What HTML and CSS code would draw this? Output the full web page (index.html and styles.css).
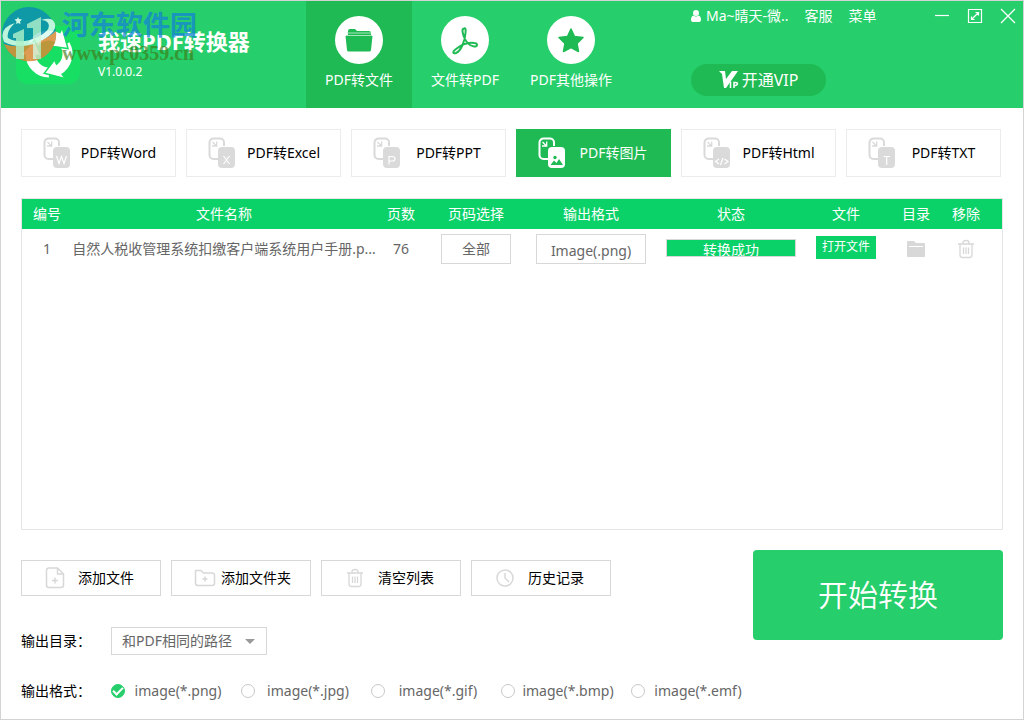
FILE: index.html
```html
<!DOCTYPE html>
<html lang="zh-CN">
<head>
<meta charset="utf-8">
<title>我速PDF转换器</title>
<link rel="stylesheet" href="styles.css">
</head>
<body>
<svg class="defs" aria-hidden="true">
  <symbol id="pages" viewBox="0 0 28 32">
    <path d="M10 22H5.5A4 4 0 0 1 1.500 18V5.500A4 4 0 0 1 5.500 1.500H12A4 4 0 0 1 16 5.500V9" fill="none" stroke="currentColor" stroke-width="2"/>
    <path d="M4.500 5L8 8.500M8.700 4.500V9H4" fill="none" stroke="currentColor" stroke-width="1.300"/>
    <rect x="10" y="10" width="17" height="21" rx="4" fill="currentColor"/>
  </symbol>
  <symbol id="trash" viewBox="0 0 18 20">
    <path d="M1 5H17M3 5V16Q3 18.500 5.500 18.500H12.500Q15 18.500 15 16V5M6 5V3.500Q6 1.500 9 1.500T12 3.500V5M6.500 8.500V15M9 8.500V15M11.500 8.500V15" fill="none" stroke="currentColor" stroke-width="1.300"/>
  </symbol>
</svg>
<div class="window">
  <header class="header">
    <div class="brand">
      <svg class="logo" viewBox="0 0 64 58" aria-hidden="true">
        <rect width="64" height="58" rx="12" fill="#17df63"/>
        <g fill="none" stroke="#fff" stroke-width="10">
          <path id="arc" d="M17 18.700A18.500 18.500 0 0 1 42.200 12"/>
          <use href="#arc" transform="rotate(120 33 28)"/>
          <use href="#arc" transform="rotate(240 33 28)"/>
        </g>
        <g fill="#fff">
          <path id="head" d="M40 15L36.500 20L51.500 22L46.500 3L43 10Z"/>
          <path id="gap" d="M36.500 20.500L52 22.500L46.500 3" fill="none" stroke="#17df63" stroke-width="1.500"/>
          <use href="#head" transform="rotate(120 33 28)"/>
          <use href="#gap" transform="rotate(120 33 28)"/>
          <use href="#head" transform="rotate(240 33 28)"/>
          <use href="#gap" transform="rotate(240 33 28)"/>
        </g>
      </svg>
      <div class="names">
        <h1 class="title">我速PDF转换器</h1>
        <span class="version">V1.0.0.2</span>
      </div>
      <div class="watermark" aria-hidden="true">
        <svg class="emblem" viewBox="0 0 56 58">
          <circle cx="28" cy="28" r="27" fill="#0b8fb0"/>
          <path d="M3 38Q17 43 33 37T55 25A27 27 0 0 1 3 38Z" fill="#d98a35"/>
          <path d="M3 36Q-3 22 14 17Q5 25 7 32Q19 39 37 31Q51 24 47 17Q45 14 40 14Q52 10 54 18Q56 27 38 36Q19 44 3 36Z" fill="#d9fbf0"/>
          <path d="M12 28L23 23V53H15V32H12ZM26 18L40 11V53H32V22H26Z" fill="#c9f5dc" opacity=".8"/>
          <path d="M17 11L18 13L21 13.500L19 15.500L19.500 18L17 17L15 18L15.500 15.500L13.500 13.500L16 13Z" fill="#e9fffa"/>
        </svg>
        <div class="marks">
          <span class="site">河东软件园</span>
          <span class="address">www.pc0359.cn</span>
        </div>
      </div>
    </div>
    <nav class="nav">
      <button class="nav-item active" type="button">
        <svg class="nav-icon" viewBox="0 0 48 48" aria-hidden="true"><circle cx="24" cy="24" r="24" fill="#fff"/><path d="M13 19V15Q13 13 15 13H20L22 15H34Q36 15 36 17V19Z" fill="#1fba53"/><path d="M12 17H36M11 19.500H37" stroke="#a7e5bd"/><path d="M10.500 20H37.500L36 34Q36 35.500 34 35.500H14Q12 35.500 12 34Z" fill="#1fba53"/></svg>
        <span>PDF转文件</span>
      </button>
      <button class="nav-item" type="button">
        <svg class="nav-icon" viewBox="0 0 48 48" aria-hidden="true"><circle cx="24" cy="24" r="24" fill="#fff"/><path d="M23 12.500C20.500 13 21.500 17 23 21C25 26 29 30 33 30.500C37 31 37 27 33 27C27 26 20 29 15 33C11 36 12 38 15 37C20 35 24 25 24.500 17C25 13 24.500 12 23 12.500Z" fill="none" stroke="#1fba53" stroke-width="2"/></svg>
        <span>文件转PDF</span>
      </button>
      <button class="nav-item" type="button">
        <svg class="nav-icon" viewBox="0 0 48 48" aria-hidden="true"><circle cx="24" cy="24" r="24" fill="#fff"/><path d="M24 13L27.500 20.500L36 21.500L30 27.500L31.500 35.500L24 31.500L16.500 35.500L18 27.500L12 21.500L20.500 20.500Z" fill="#1fba53" stroke="#1fba53" stroke-width="1.500" stroke-linejoin="round"/></svg>
        <span>PDF其他操作</span>
      </button>
    </nav>
    <div class="account">
      <div class="top-bar">
        <button class="link user" type="button"><svg class="user-icon" viewBox="0 0 10 12" aria-hidden="true"><circle cx="5" cy="3" r="3" fill="#fff"/><path d="M0 10Q0 6 2.500 5.500Q5 7.500 7.500 5.500Q10 6 10 10Q10 12 8 12H2Q0 12 0 10Z" fill="#fff"/></svg>Ma~晴天-微..</button>
        <button class="link" type="button">客服</button>
        <button class="link" type="button">菜单</button>
        <div class="controls">
          <button class="control" type="button" aria-label="最小化"><svg viewBox="0 0 16 16"><path d="M1 7.500H15"/></svg></button>
          <button class="control" type="button" aria-label="最大化"><svg viewBox="0 0 16 16"><path d="M1.500 1.500H14.500V14.500H1.500ZM5 11L11 5M8.500 4.500H11.500V7.500M4.500 8.500V11.500H7.500"/></svg></button>
          <button class="control" type="button" aria-label="关闭"><svg viewBox="0 0 16 16"><path d="M1 1L15 15M15 1L1 15"/></svg></button>
        </div>
      </div>
      <button class="vip" type="button"><svg class="vip-icon" viewBox="0 0 20 18" aria-hidden="true"><path d="M0 0H6L7 8L13 0H19L7 17H5L3 3Z" fill="#fff"/><path d="M11.500 10.500V17M15 17V11.500H16.500Q18.500 11.500 18.500 12.800T16.500 14.500H15" fill="none" stroke="#fff" stroke-width="1.500"/></svg>开通VIP</button>
    </div>
  </header>

  <main class="content">
    <div class="formats">
      <button class="format" type="button"><svg class="format-icon" viewBox="0 0 28 32" aria-hidden="true"><use href="#pages"/><path class="mark" d="M13.500 19L16 26.500L18.500 19.500L21 26.500L23.500 19"/></svg><span>PDF转Word</span></button>
      <button class="format" type="button"><svg class="format-icon" viewBox="0 0 28 32" aria-hidden="true"><use href="#pages"/><path class="mark" d="M15.500 19L21.500 27M21.500 19L15.500 27"/></svg><span>PDF转Excel</span></button>
      <button class="format" type="button"><svg class="format-icon" viewBox="0 0 28 32" aria-hidden="true"><use href="#pages"/><path class="mark" d="M16 27.500V19.500H19Q22 19.500 22 21.800T19 24H16"/></svg><span>PDF转PPT</span></button>
      <button class="format active" type="button"><svg class="format-icon" viewBox="0 0 28 32" aria-hidden="true"><use href="#pages"/><circle cx="17" cy="20.500" r="1.700" fill="#1fba53"/><path d="M12.500 28L16 23.500L18.500 26L21 22L25 28Z" fill="#1fba53"/></svg><span>PDF转图片</span></button>
      <button class="format" type="button"><svg class="format-icon" viewBox="0 0 28 32" aria-hidden="true"><use href="#pages"/><path class="mark" d="M16 22L12.500 24.500L16 27M21.500 22L25 24.500L21.500 27M20 21L17.500 28"/></svg><span>PDF转Html</span></button>
      <button class="format" type="button"><svg class="format-icon" viewBox="0 0 28 32" aria-hidden="true"><use href="#pages"/><path class="mark" d="M15.500 19.500H22M18.700 19.500V28"/></svg><span>PDF转TXT</span></button>
    </div>

    <section class="panel">
      <table class="files">
        <colgroup><col class="c50"><col><col class="c50"><col class="c100"><col class="c130"><col class="c150"><col class="c80"><col class="c60"><col class="c40"><col class="c16"></colgroup>
        <thead>
          <tr><th>编号</th><th>文件名称</th><th>页数</th><th>页码选择</th><th>输出格式</th><th>状态</th><th>文件</th><th>目录</th><th>移除</th><th></th></tr>
        </thead>
        <tbody>
          <tr>
            <td>1</td>
            <td class="file-name">自然人税收管理系统扣缴客户端系统用户手册.p...</td>
            <td>76</td>
            <td><button class="cell-button pages" type="button">全部</button></td>
            <td><button class="cell-button output" type="button">Image(.png)</button></td>
            <td><div class="status">转换成功</div></td>
            <td><button class="open" type="button">打开文件</button></td>
            <td><button class="icon-button" type="button" aria-label="打开目录"><svg class="folder-icon" viewBox="0 0 18 16" aria-hidden="true"><path d="M0 1Q0 0 1 0H7L9 2H17Q18 2 18 3V15Q18 16 17 16H1Q0 16 0 15Z" fill="#d8d8d8"/><path d="M2 5.500H16" stroke="#fff"/></svg></button></td>
            <td><button class="icon-button" type="button" aria-label="移除"><svg class="trash-icon" aria-hidden="true"><use href="#trash"/></svg></button></td>
            <td></td>
          </tr>
        </tbody>
      </table>
    </section>

    <footer class="footer">
      <div class="options">
        <div class="actions">
          <button class="action" type="button"><span class="slot"><svg width="20" height="22" viewBox="0 0 20 22" aria-hidden="true"><path d="M12.500 1H4Q1.500 1 1.500 3.500V18Q1.500 20.500 4 20.500H16Q18.500 20.500 18.500 18V7ZM12.500 1V7H18.500M10 10.500V16.500M7 13.500H13"/></svg></span><span class="caption">添加文件</span></button>
          <button class="action" type="button"><span class="slot"><svg width="22" height="18" viewBox="0 0 22 18" aria-hidden="true"><path d="M1.500 1.500H7L9.500 4H18Q20.500 4 20.500 6V14.500Q20.500 16.500 18 16.500H4Q1.500 16.500 1.500 14ZM11 7.500V12.500M8.500 10H13.500"/></svg></span><span class="caption">添加文件夹</span></button>
          <button class="action" type="button"><span class="slot"><svg width="18" height="20" aria-hidden="true"><use href="#trash"/></svg></span><span class="caption">清空列表</span></button>
          <button class="action" type="button"><span class="slot"><svg width="18" height="18" viewBox="0 0 18 18" aria-hidden="true"><circle cx="9" cy="9" r="8"/><path d="M9 4V9L13 13"/></svg></span><span class="caption">历史记录</span></button>
        </div>
        <div class="row">
          <label class="row-label" for="folder">输出目录：</label>
          <div class="picker">
            <select id="folder" class="select"><option>和PDF相同的路径</option></select>
            <svg class="caret" viewBox="0 0 10 5" aria-hidden="true"><path d="M0 0H10L5 5Z" fill="#999"/></svg>
          </div>
        </div>
        <div class="row types" role="radiogroup" aria-labelledby="type-label">
          <span class="row-label" id="type-label">输出格式：</span>
          <label class="type"><input type="radio" name="type" checked><span>image(*.png)</span></label>
          <label class="type"><input type="radio" name="type"><span>image(*.jpg)</span></label>
          <label class="type"><input type="radio" name="type"><span>image(*.gif)</span></label>
          <label class="type"><input type="radio" name="type"><span>image(*.bmp)</span></label>
          <label class="type"><input type="radio" name="type"><span>image(*.emf)</span></label>
        </div>
      </div>
      <button class="start" type="button">开始转换</button>
    </footer>
  </main>
</div>
</body>
</html>
```

FILE: styles.css
```css
* { box-sizing: border-box; }

body {
  margin: 0;
  background: #fff;
  color: #000;
  font: 14px/20px "Noto Sans", "Noto Sans CJK SC", sans-serif;
}

button, select, input { font: inherit; color: inherit; }
button { padding: 0; border: 0; background: none; white-space: nowrap; cursor: pointer; }
svg { display: block; flex: none; }
.defs { position: absolute; width: 0; height: 0; }

.window {
  display: flex;
  flex-direction: column;
  min-height: 100vh;
  border: 1px solid #d3d3d3;
}

/* Header */
.header {
  display: grid;
  grid-template-columns: 305px 318px 1fr;
  height: 107px;
  background: #26cf6b;
  color: #fff;
}
.brand {
  position: relative;
  display: flex;
  align-items: flex-start;
  gap: 18px;
  padding: 25px 0 0 15px;
}
.logo { width: 64px; height: 58px; }
.title { margin: 0; font-size: 22px; line-height: 30px; font-weight: 700; white-space: nowrap; }
.version { display: block; margin-top: 6px; font-size: 12px; line-height: 20px; }
.watermark {
  position: absolute;
  top: 5px;
  left: 0;
  display: flex;
  gap: 5px;
}
.emblem { width: 56px; height: 58px; opacity: .85; }
.marks { display: flex; flex-direction: column; white-space: nowrap; }
.site {
  color: #1583d6;
  font: 700 27px/36px "Noto Sans CJK SC", sans-serif;
  opacity: .75;
}
.address {
  color: #3d7a14;
  font: 700 20px/22px "Liberation Serif", serif;
  opacity: .65;
}

.nav { display: grid; grid-template-columns: repeat(3, 1fr); }
.nav-item {
  display: flex;
  flex-direction: column;
  align-items: center;
  gap: 6px;
  padding-top: 15px;
}
.nav-item.active { background: #1fba53; }
.nav-icon { width: 48px; height: 48px; }

.account { display: flex; flex-direction: column; align-items: flex-start; padding-left: 67px; }
.top-bar { display: flex; align-items: center; gap: 16px; width: 100%; height: 29px; padding-right: 7px; }
.user { display: flex; align-items: center; gap: 5px; }
.user-icon { width: 10px; height: 12px; }
.controls { display: flex; gap: 17px; margin-left: auto; }
.control svg { width: 16px; height: 16px; fill: none; stroke: #fff; stroke-width: 1.2; }
.vip {
  display: flex;
  align-items: center;
  justify-content: center;
  gap: 3px;
  width: 135px;
  height: 32px;
  margin-top: 34px;
  border-radius: 16px;
  background: #1fba53;
  font-size: 16px;
}
.vip-icon { width: 20px; height: 18px; }

/* Body */
.content { display: flex; flex: 1; flex-direction: column; padding: 21px 20px 18px; }
.formats {
  display: grid;
  grid-template-columns: repeat(6, 1fr);
  gap: 10px;
  padding-right: 2px;
}
.format {
  display: flex;
  align-items: center;
  height: 48px;
  padding: 0 9px 0 21px;
  border: 1px solid #ececec;
}
.format.active { border-color: #1fba53; background: #1fba53; color: #fff; }
.format span { flex: 1; text-align: center; }
.format-icon { width: 28px; height: 32px; color: #dadada; }
.active .format-icon { color: #fff; }
.mark { fill: none; stroke: #fff; stroke-width: 1.2; }

.panel { flex: 1; min-height: 200px; margin-top: 21px; border: 1px solid #e6e6e6; }
.files { width: 100%; table-layout: fixed; border-collapse: collapse; }
.files th { height: 30px; padding: 0; background: #0bd268; color: #fff; font-weight: 400; }
.files td { height: 40px; padding: 0; color: #666; text-align: center; }
.files .file-name { overflow: hidden; white-space: nowrap; }
.c16 { width: 16px; }
.c40 { width: 40px; }
.c50 { width: 50px; }
.c60 { width: 60px; }
.c80 { width: 80px; }
.c100 { width: 100px; }
.c130 { width: 130px; }
.c150 { width: 150px; }
.cell-button { display: block; height: 30px; margin: 0 auto; border: 1px solid #d8d8d8; }
.pages { width: 70px; }
.output { width: 110px; padding-top: 4px; }
.status {
  width: 130px;
  height: 18px;
  margin: 0 auto 2px;
  overflow: hidden;
  border: 1px solid #d8d8d8;
  background: #0bd268;
  color: #fff;
}
.open { display: block; width: 60px; height: 23px; margin: 0 auto 4px; background: #0bd268; color: #fff; font-size: 12px; }
.icon-button { display: block; margin: 0 auto; color: #d8d8d8; }
.folder-icon { width: 18px; height: 16px; }
.trash-icon { width: 18px; height: 20px; }

/* Footer */
.footer { display: flex; align-items: flex-start; justify-content: space-between; margin-top: 20px; }
.options { min-width: 0; padding-top: 10px; }
.actions { display: flex; gap: 10px; }
.action {
  display: flex;
  align-items: center;
  width: 140px;
  height: 36px;
  padding: 0 17px 0 19px;
  border: 1px solid #d8d8d8;
}
.slot { display: flex; flex: none; justify-content: center; width: 28px; color: #d8d8d8; }
.slot svg { fill: none; stroke: #d8d8d8; stroke-width: 1.5; }
.caption { flex: 1; text-align: center; }
.row { display: flex; align-items: center; margin-top: 31px; }
.row-label { flex: none; width: 90px; }
.picker { position: relative; }
.select {
  display: block;
  width: 156px;
  height: 28px;
  padding: 0 10px;
  border: 1px solid #d8d8d8;
  border-radius: 0;
  background: #fff;
  color: #666;
  appearance: none;
}
.caret { position: absolute; top: 12px; right: 12px; width: 10px; height: 5px; pointer-events: none; }
.types { margin-top: 26px; }
.type { display: flex; flex: none; align-items: center; width: 130px; color: #666; }
.type:last-child { width: 120px; }
.type span { width: 106px; text-align: center; }
.type input {
  display: grid;
  flex: none;
  place-items: center;
  width: 14px;
  height: 14px;
  margin: 0;
  border: 1px solid #c8c8c8;
  border-radius: 50%;
  background: #fff;
  appearance: none;
}
.type input:checked { border-color: #26cf6b; background: #26cf6b; }
.type input:checked::after {
  content: "";
  width: 8px;
  height: 4px;
  margin-bottom: 2px;
  border: solid #fff;
  border-width: 0 0 2px 2px;
  transform: rotate(-45deg);
}
.start {
  flex: none;
  width: 250px;
  height: 90px;
  border-radius: 4px;
  background: #26cf6b;
  color: #fff;
  font-size: 30px;
  font-weight: 350;
  line-height: 40px;
}
```
